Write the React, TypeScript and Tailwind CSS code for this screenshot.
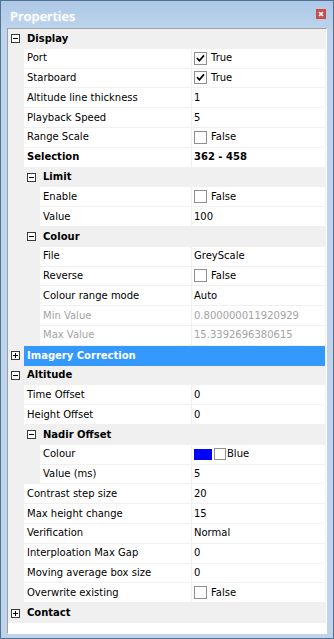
import React from "react";

type Row =
  | { kind: "cat"; level: number; label: string; open: boolean; selected?: boolean }
  | {
      kind: "prop";
      level: number;
      label: string;
      value: string;
      bold?: boolean;
      disabled?: boolean;
      check?: boolean;
      swatch?: boolean;
    };

const rows: Row[] = [
  { kind: "cat", level: 0, label: "Display", open: true },
  { kind: "prop", level: 1, label: "Port", value: "True", check: true },
  { kind: "prop", level: 1, label: "Starboard", value: "True", check: true },
  { kind: "prop", level: 1, label: "Altitude line thickness", value: "1" },
  { kind: "prop", level: 1, label: "Playback Speed", value: "5" },
  { kind: "prop", level: 1, label: "Range Scale", value: "False", check: false },
  { kind: "prop", level: 1, label: "Selection", value: "362 - 458", bold: true },
  { kind: "cat", level: 1, label: "Limit", open: true },
  { kind: "prop", level: 2, label: "Enable", value: "False", check: false },
  { kind: "prop", level: 2, label: "Value", value: "100" },
  { kind: "cat", level: 1, label: "Colour", open: true },
  { kind: "prop", level: 2, label: "File", value: "GreyScale" },
  { kind: "prop", level: 2, label: "Reverse", value: "False", check: false },
  { kind: "prop", level: 2, label: "Colour range mode", value: "Auto" },
  { kind: "prop", level: 2, label: "Min Value", value: "0.800000011920929", disabled: true },
  { kind: "prop", level: 2, label: "Max Value", value: "15.3392696380615", disabled: true },
  { kind: "cat", level: 0, label: "Imagery Correction", open: false, selected: true },
  { kind: "cat", level: 0, label: "Altitude", open: true },
  { kind: "prop", level: 1, label: "Time Offset", value: "0" },
  { kind: "prop", level: 1, label: "Height Offset", value: "0" },
  { kind: "cat", level: 1, label: "Nadir Offset", open: true },
  { kind: "prop", level: 2, label: "Colour", value: "Blue", swatch: true },
  { kind: "prop", level: 2, label: "Value (ms)", value: "5" },
  { kind: "prop", level: 1, label: "Contrast step size", value: "20" },
  { kind: "prop", level: 1, label: "Max height change", value: "15" },
  { kind: "prop", level: 1, label: "Verification", value: "Normal" },
  { kind: "prop", level: 1, label: "Interploation Max Gap", value: "0" },
  { kind: "prop", level: 1, label: "Moving average box size", value: "0" },
  { kind: "prop", level: 1, label: "Overwrite existing", value: "False", check: false },
  { kind: "cat", level: 0, label: "Contact", open: false },
];

const indent: Record<number, string> = {
  0: "w-[16px] pl-[3px]",
  1: "w-[32px] pl-[19px]",
  2: "w-[48px] pl-[35px]",
};
const margin: Record<number, string> = {
  1: "w-[16px]",
  2: "w-[32px]",
};

const Toggle: React.FC<{ open: boolean }> = ({ open }) => (
  <svg width="9" height="9" viewBox="0 0 9 9" className="block">
    <rect x="0.5" y="0.5" width="8" height="8" fill="#fff" stroke="#3a3a3a" />
    <line x1="2" y1="4.5" x2="7" y2="4.5" stroke="#000" />
    {!open && <line x1="4.5" y1="2" x2="4.5" y2="7" stroke="#000" />}
  </svg>
);

const CheckBox: React.FC<{ on: boolean }> = ({ on }) => (
  <svg width="13" height="13" viewBox="0 0 13 13" className="block shrink-0">
    <rect x="0.5" y="0.5" width="12" height="12" fill="#fff" stroke="#8e8f8f" />
    {on && <path d="M3 6.2 L5.4 8.8 L10 3.4" fill="none" stroke="#000" strokeWidth="1.7" />}
  </svg>
);

const PropertyRow: React.FC<{ row: Row }> = ({ row }) => {
  if (row.kind === "cat") {
    return (
      <div className="flex h-[19.8px] items-center">
        <div className={`${indent[row.level]} flex h-full shrink-0 items-center`}>
          <Toggle open={row.open} />
        </div>
        <div
          className={`flex h-full flex-1 items-center pl-[3px] font-bold ${
            row.selected ? "mr-[1px] bg-[#3399ff] text-white" : "text-black"
          }`}
        >
          {row.label}
        </div>
      </div>
    );
  }
  const text = row.disabled ? "text-[#a3a3a3]" : "text-black";
  return (
    <div className="flex h-[19.8px] pb-[1px] pr-[1px]">
      <div className={`${margin[row.level]} shrink-0`} />
      <div
        className={`flex flex-1 items-center bg-white pl-[3px] ${text} ${row.bold ? "font-bold" : ""}`}
      >
        {row.label}
      </div>
      <div
        className={`ml-[1px] flex w-[133px] shrink-0 items-center gap-[4px] bg-white pl-[2px] ${text} ${
          row.bold ? "font-bold" : ""
        }`}
      >
        {row.check !== undefined && <CheckBox on={row.check} />}
        {row.swatch && (
          <div className="flex items-center gap-[2px]">
            <div className="h-[11px] w-[18px] bg-[#0000ff]" />
            <div className="h-[12px] w-[12px] border border-[#8e8f8f] bg-white" />
          </div>
        )}
        <span className={row.swatch ? "-ml-[3px]" : ""}>{row.value}</span>
      </div>
    </div>
  );
};

export default function App() {
  return (
    <div className="h-[639px] w-[334px] border border-[#52708f] bg-[#bfd4ec]">
      <div className="flex h-[27px] items-start bg-gradient-to-b from-[#adc8e6] to-[#bcd3eb]">
        <span
          className="pl-[9px] pt-[6px] text-[13px] font-semibold leading-[18px] text-white [text-shadow:0_0_3px_rgba(255,255,255,0.6)]"
          style={{ fontFamily: '"Open Sans", "Noto Sans", sans-serif' }}
        >
          Properties
        </span>
        <div className="ml-auto mr-[7px] mt-[8px] flex h-[10px] w-[10px] items-center justify-center bg-[#c94b4b]">
          <svg width="6" height="6" viewBox="0 0 6 6">
            <path d="M1 1 L5 5 M5 1 L1 5" stroke="#fff" strokeWidth="1.6" />
          </svg>
        </div>
      </div>
      <div
        className="mx-[6px] h-[606px] border-b border-l border-r border-t border-b-white border-l-[#a0a0a0] border-r-white border-t-[#a0a0a0] bg-white text-[10px] leading-[12px]"
        style={{ fontFamily: '"DejaVu Sans", Verdana, sans-serif' }}
      >
        <div className="flex flex-col bg-[#f0f0f0]">
          {rows.map((r, i) => (
            <PropertyRow key={i} row={r} />
          ))}
        </div>
      </div>
    </div>
  );
}
